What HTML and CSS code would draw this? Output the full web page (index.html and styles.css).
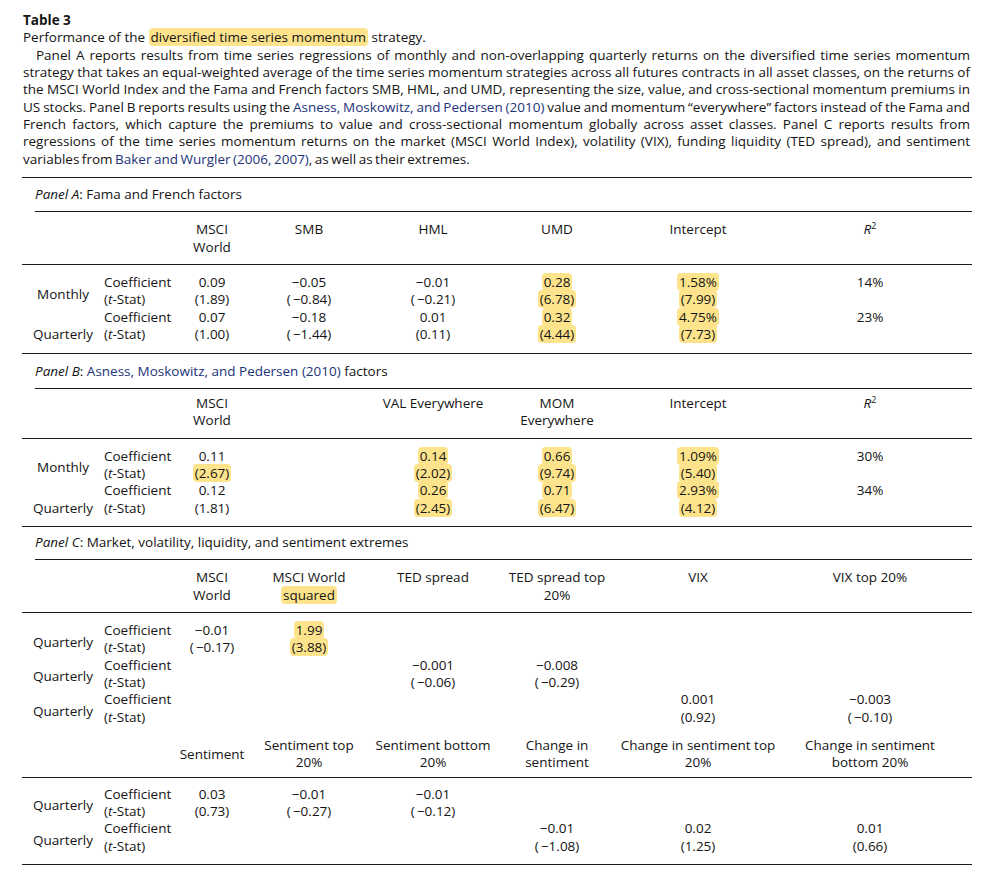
FILE: index.html
```html
<!DOCTYPE html>
<html lang="en">
<head>
<meta charset="utf-8">
<title>Table 3</title>
<link rel="stylesheet" href="styles.css">
</head>
<body>
<div class="page">
  <div class="caption">
    <div class="table-no">Table 3</div>
    <div class="table-title">Performance of the <span class="hl">diversified time series momentum</span> strategy.</div>
    <p class="desc">
      <span class="ln first">Panel A reports results from time series regressions of monthly and non-overlapping quarterly returns on the diversified time series momentum</span>
      <span class="ln">strategy that takes an equal-weighted average of the time series momentum strategies across all futures contracts in all asset classes, on the returns of</span>
      <span class="ln">the MSCI World Index and the Fama and French factors SMB, HML, and UMD, representing the size, value, and cross-sectional momentum premiums in</span>
      <span class="ln">US stocks. Panel B reports results using the <span class="cite">Asness, Moskowitz, and Pedersen (2010)</span> value and momentum &ldquo;everywhere&rdquo; factors instead of the Fama and</span>
      <span class="ln">French factors, which capture the premiums to value and cross-sectional momentum globally across asset classes. Panel C reports results from</span>
      <span class="ln">regressions of the time series momentum returns on the market (MSCI World Index), volatility (VIX), funding liquidity (TED spread), and sentiment</span>
      <span class="ln last">variables from <span class="cite">Baker and Wurgler (2006, 2007)</span>, as well as their extremes.</span>
    </p>
  </div>

  <section class="panel panel-a">
    <div class="rule"></div>
    <div class="panel-title"><i>Panel A</i>: Fama and French factors</div>
    <div class="rule inset"></div>
    <div class="grid head">
      <div></div><div></div>
      <div>MSCI<br>World</div>
      <div>SMB</div>
      <div>HML</div>
      <div>UMD</div>
      <div>Intercept</div>
      <div><i>R</i><sup>2</sup></div>
    </div>
    <div class="rule"></div>
    <div class="grid body">
      <div class="lbl mid">Monthly</div>
      <div class="stat">Coefficient</div>
      <div>0.09</div><div>&minus;0.05</div><div>&minus;0.01</div><div><span class="hl">0.28</span></div><div><span class="hl">1.58%</span></div><div>14%</div>
      <div class="stat">(<i>t</i>-Stat)</div>
      <div>(1.89)</div><div>(&thinsp;&minus;0.84)</div><div>(&thinsp;&minus;0.21)</div><div><span class="hl">(6.78)</span></div><div><span class="hl">(7.99)</span></div><div></div>
      <div class="lbl low">Quarterly</div>
      <div class="stat">Coefficient</div>
      <div>0.07</div><div>&minus;0.18</div><div>0.01</div><div><span class="hl">0.32</span></div><div><span class="hl">4.75%</span></div><div>23%</div>
      <div class="stat">(<i>t</i>-Stat)</div>
      <div>(1.00)</div><div>(&thinsp;&minus;1.44)</div><div>(0.11)</div><div><span class="hl">(4.44)</span></div><div><span class="hl">(7.73)</span></div><div></div>
    </div>
  </section>

  <section class="panel panel-b">
    <div class="rule"></div>
    <div class="panel-title"><i>Panel B</i>: <span class="cite">Asness, Moskowitz, and Pedersen (2010)</span> factors</div>
    <div class="rule inset"></div>
    <div class="grid head">
      <div></div><div></div>
      <div>MSCI<br>World</div>
      <div></div>
      <div>VAL Everywhere</div>
      <div>MOM<br>Everywhere</div>
      <div>Intercept</div>
      <div><i>R</i><sup>2</sup></div>
    </div>
    <div class="rule"></div>
    <div class="grid body">
      <div class="lbl mid">Monthly</div>
      <div class="stat">Coefficient</div>
      <div>0.11</div><div></div><div><span class="hl">0.14</span></div><div><span class="hl">0.66</span></div><div><span class="hl">1.09%</span></div><div>30%</div>
      <div class="stat">(<i>t</i>-Stat)</div>
      <div><span class="hl">(2.67)</span></div><div></div><div><span class="hl">(2.02)</span></div><div><span class="hl">(9.74)</span></div><div><span class="hl">(5.40)</span></div><div></div>
      <div class="lbl low">Quarterly</div>
      <div class="stat">Coefficient</div>
      <div>0.12</div><div></div><div><span class="hl">0.26</span></div><div><span class="hl">0.71</span></div><div><span class="hl">2.93%</span></div><div>34%</div>
      <div class="stat">(<i>t</i>-Stat)</div>
      <div>(1.81)</div><div></div><div><span class="hl">(2.45)</span></div><div><span class="hl">(6.47)</span></div><div><span class="hl">(4.12)</span></div><div></div>
    </div>
  </section>

  <section class="panel panel-c">
    <div class="rule"></div>
    <div class="panel-title"><i>Panel C</i>: Market, volatility, liquidity, and sentiment extremes</div>
    <div class="rule inset"></div>
    <div class="grid head">
      <div></div><div></div>
      <div>MSCI<br>World</div>
      <div>MSCI World<br><span class="hl">squared</span></div>
      <div>TED spread</div>
      <div>TED spread top<br>20%</div>
      <div>VIX</div>
      <div>VIX top 20%</div>
    </div>
    <div class="rule"></div>
    <div class="grid body">
      <div class="lbl mid">Quarterly</div>
      <div class="stat">Coefficient</div>
      <div>&minus;0.01</div><div><span class="hl">1.99</span></div><div></div><div></div><div></div><div></div>
      <div class="stat">(<i>t</i>-Stat)</div>
      <div>(&thinsp;&minus;0.17)</div><div><span class="hl">(3.88)</span></div><div></div><div></div><div></div><div></div>
      <div class="lbl mid">Quarterly</div>
      <div class="stat">Coefficient</div>
      <div></div><div></div><div>&minus;0.001</div><div>&minus;0.008</div><div></div><div></div>
      <div class="stat">(<i>t</i>-Stat)</div>
      <div></div><div></div><div>(&thinsp;&minus;0.06)</div><div>(&thinsp;&minus;0.29)</div><div></div><div></div>
      <div class="lbl mid">Quarterly</div>
      <div class="stat">Coefficient</div>
      <div></div><div></div><div></div><div></div><div>0.001</div><div>&minus;0.003</div>
      <div class="stat">(<i>t</i>-Stat)</div>
      <div></div><div></div><div></div><div></div><div>(0.92)</div><div>(&thinsp;&minus;0.10)</div>
    </div>
    <div class="grid head sub">
      <div></div><div></div>
      <div class="vmid">Sentiment</div>
      <div>Sentiment top<br>20%</div>
      <div>Sentiment bottom<br>20%</div>
      <div>Change in<br>sentiment</div>
      <div>Change in sentiment top<br>20%</div>
      <div>Change in sentiment<br>bottom 20%</div>
    </div>
    <div class="rule"></div>
    <div class="grid body last-body">
      <div class="lbl mid">Quarterly</div>
      <div class="stat">Coefficient</div>
      <div>0.03</div><div>&minus;0.01</div><div>&minus;0.01</div><div></div><div></div><div></div>
      <div class="stat">(<i>t</i>-Stat)</div>
      <div>(0.73)</div><div>(&thinsp;&minus;0.27)</div><div>(&thinsp;&minus;0.12)</div><div></div><div></div><div></div>
      <div class="lbl mid">Quarterly</div>
      <div class="stat">Coefficient</div>
      <div></div><div></div><div></div><div>&minus;0.01</div><div>0.02</div><div>0.01</div>
      <div class="stat">(<i>t</i>-Stat)</div>
      <div></div><div></div><div></div><div>(&thinsp;&minus;1.08)</div><div>(1.25)</div><div>(0.66)</div>
    </div>
    <div class="rule"></div>
  </section>
</div>
</body>
</html>
```

FILE: styles.css
```css
html, body {
  margin: 0;
  padding: 0;
  background: #ffffff;
}

body {
  font-family: "Open Sans", "Noto Sans", sans-serif;
  font-size: 13.5px;
  line-height: 17.35px;
  color: #141414;
}

.page {
  width: 950px;
  margin-left: 22px;
  padding-top: 12px;
}

.caption {
  padding-left: 1px;
  padding-right: 2px;
}

.table-no {
  font-weight: 700;
}

.desc {
  margin: 0 0 9px 0;
  word-spacing: -1px;
}

.desc .ln {
  display: block;
  text-align: justify;
  text-align-last: justify;
}

.desc .ln.first {
  padding-left: 13px;
}

.desc .ln.last {
  text-align-last: left;
}

.cite {
  color: #22337a;
}

.hl {
  background: #fde48c;
  border-radius: 4px;
  padding: 0 2px;
}

.rule {
  height: 1px;
  background: #1a1a1a;
}

.rule.inset {
  margin-left: 13px;
}

.panel-title {
  padding: 8px 0 8px 13px;
}

.panel-b .panel-title {
  padding-top: 9px;
}

.panel-c .panel-title {
  padding-top: 7px;
}

.grid {
  display: grid;
  grid-template-columns: 82px 66px 84px 110px 138px 110px 172px 172px;
  text-align: center;
}

.grid.head {
  padding: 9px 0 8px 0;
}

.panel-b .grid.head {
  padding-top: 6px;
}

.grid.head.sub {
  padding: 2px 0 5px 0;
}

.grid.body {
  padding: 9px 0 9px 0;
}

.grid.body.last-body {
  padding-top: 8px;
}

.vmid {
  align-self: center;
}

.lbl {
  grid-row: span 2;
  text-align: center;
}

.lbl.mid {
  align-self: center;
  padding-top: 6px;
}

.lbl.low {
  align-self: end;
}

.stat {
  text-align: left;
  white-space: nowrap;
}

sup {
  font-size: 9px;
  line-height: 0;
  vertical-align: 5px;
}
```
